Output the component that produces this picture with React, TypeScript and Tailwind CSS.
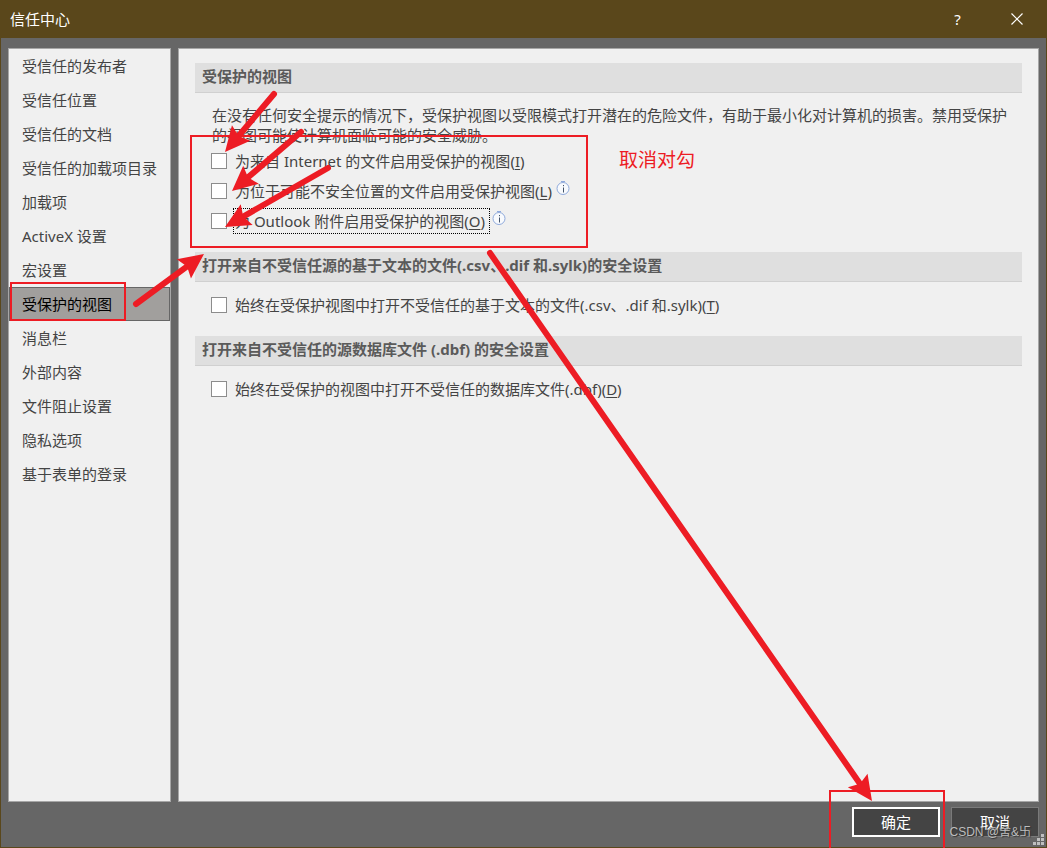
import type { ReactNode } from "react";

const categories = [
  "受信任的发布者",
  "受信任位置",
  "受信任的文档",
  "受信任的加载项目录",
  "加载项",
  "ActiveX 设置",
  "宏设置",
  "受保护的视图",
  "消息栏",
  "外部内容",
  "文件阻止设置",
  "隐私选项",
  "基于表单的登录",
];

const selected = "受保护的视图";

function InfoIcon() {
  return (
    <svg viewBox="0 0 14 14" className="mb-1.5 ml-0.5 size-[14px] shrink-0" aria-hidden="true">
      <circle cx="7" cy="7.5" r="6" fill="#f8fafd" stroke="#8faadc" strokeWidth="1" />
      <path d="M5 0.5h4" stroke="#8faadc" strokeWidth="1" />
      <path d="M7.5 4v1.2M7.5 6.5v5" stroke="#44546a" strokeWidth="1" />
    </svg>
  );
}

interface SectionProps {
  title: string;
  children: ReactNode;
}

function Section({ title, children }: SectionProps) {
  return (
    <section className="mb-4">
      <h2 className="h-[30px] border-b border-[#d0d0d0] bg-[#dfdfdf] pl-[7px] text-[15px] leading-[26px] font-bold text-[#5a5a5a]">
        {title}
      </h2>
      {children}
    </section>
  );
}

interface OptionProps {
  id: string;
  label: string;
  hotkey: string;
  info?: boolean;
  focused?: boolean;
}

function Option({ id, label, hotkey, info, focused }: OptionProps) {
  return (
    <div className="flex h-[30px] items-center pl-4">
      <input
        id={id}
        type="checkbox"
        className="size-4 shrink-0 appearance-none border border-[#8c8c8c] bg-white checked:bg-[#444]"
      />
      <label
        htmlFor={id}
        className={
          focused
            ? "ml-[6px] border border-dotted border-black pr-1 pl-px leading-6"
            : "ml-[6px] border border-transparent px-px leading-6"
        }
      >
        {label}(<u className="underline-offset-2">{hotkey}</u>)
      </label>
      {info && <InfoIcon />}
    </div>
  );
}

interface ArrowProps {
  from: [number, number];
  to: [number, number];
}

function Arrow({ from, to }: ArrowProps) {
  const length = Math.hypot(to[0] - from[0], to[1] - from[1]);
  const angle = (Math.atan2(to[1] - from[1], to[0] - from[0]) * 180) / Math.PI;
  return (
    <g transform={`translate(${from[0]} ${from[1]}) rotate(${angle})`}>
      <path d={`M0 0H${length - 18}`} stroke="#ed1c24" strokeWidth="6" strokeLinecap="round" />
      <path d={`M${length} 0l-25 -12l4 12l-4 12z`} fill="#ed1c24" />
    </g>
  );
}

function Annotations() {
  return (
    <div className="pointer-events-none absolute inset-0 overflow-hidden">
      <svg width="1047" height="848" fill="none" className="max-w-none" aria-hidden="true">
        <g stroke="#ed1c24" strokeWidth="2">
          <rect x="191" y="136" width="396" height="111" />
          <rect x="11" y="283" width="114" height="37" />
          <rect x="830" y="791" width="114" height="60" />
        </g>
        <Arrow from={[274, 94]} to={[225, 152]} />
        <Arrow from={[301, 132]} to={[232, 191]} />
        <Arrow from={[328, 168]} to={[225, 227]} />
        <Arrow from={[136, 304]} to={[204, 254]} />
        <Arrow from={[490, 253]} to={[872, 801]} />
      </svg>
      <p className="absolute top-[146px] left-[619px] text-[19px] leading-7 text-[#ed1c24]">取消对勾</p>
      <p className="absolute right-4 bottom-2 font-['Liberation_Sans','Noto_Sans_CJK_SC',sans-serif] text-[12px] leading-4 text-[#bdbdbd] [text-shadow:1px_1px_1px_#333]">
        CSDN @舍&amp;卐
      </p>
    </div>
  );
}

export default function App() {
  return (
    <div className="relative flex min-h-screen flex-col bg-[#5a471b] font-['Noto_Sans','Noto_Sans_CJK_SC',sans-serif] text-[15px] text-[#444]">
      <header className="flex h-[38px] items-center pl-[10px] text-white">
        <h1 className="flex-1">信任中心</h1>
        <button type="button" aria-label="帮助" className="h-full w-[57px]">
          ?
        </button>
        <button type="button" aria-label="关闭" className="flex h-full w-[61px] items-center justify-center">
          <svg viewBox="0 0 12 12" className="size-3" fill="none" stroke="white" strokeWidth="1.2">
            <path d="M0.5 0.5l11 11M11.5 0.5l-11 11" />
          </svg>
        </button>
      </header>

      <div className="mx-px mb-px flex flex-1 flex-col bg-[#666] px-[7px] pt-[10px]">
        <div className="flex flex-1 gap-[7px]">
          <nav className="w-[163px] shrink-0 border border-[#a6a6a6] bg-[#f0f0f0]">
            <ul>
              {categories.map((name) => (
                <li key={name}>
                  <button
                    type="button"
                    className={
                      name === selected
                        ? "h-[34px] w-full border border-[#666] bg-[#a19f9d] pl-3 text-left text-black"
                        : "h-[34px] w-full border border-transparent pl-3 text-left"
                    }
                  >
                    {name}
                  </button>
                </li>
              ))}
            </ul>
          </nav>

          <main className="min-w-0 flex-1 border border-[#a6a6a6] bg-[#f0f0f0] px-4 pt-[14px]">
            <Section title="受保护的视图">
              <p className="mt-3 mb-px pr-3 pl-[17px] leading-5">
                在没有任何安全提示的情况下，受保护视图以受限模式打开潜在的危险文件，有助于最小化对计算机的损害。禁用受保护的视图可能使计算机面临可能的安全威胁。
              </p>
              <Option id="internet" label="为来自 Internet 的文件启用受保护的视图" hotkey="I" />
              <Option id="unsafe" label="为位于可能不安全位置的文件启用受保护视图" hotkey="L" info />
              <Option id="outlook" label="为 Outlook 附件启用受保护的视图" hotkey="O" info focused />
            </Section>
            <Section title="打开来自不受信任源的基于文本的文件(.csv、.dif 和.sylk)的安全设置">
              <div className="pt-2">
                <Option id="text" label="始终在受保护视图中打开不受信任的基于文本的文件(.csv、.dif 和.sylk)" hotkey="T" />
              </div>
            </Section>
            <Section title="打开来自不受信任的源数据库文件 (.dbf) 的安全设置">
              <div className="pt-2">
                <Option id="database" label="始终在受保护的视图中打开不受信任的数据库文件(.dbf)" hotkey="D" />
              </div>
            </Section>
          </main>
        </div>

        <footer className="relative flex h-[45px] justify-end gap-[11px] pt-[5px] text-white">
          <button type="button" className="h-[30px] w-[88px] border-2 border-white bg-[#444]">
            确定
          </button>
          <button type="button" className="h-[30px] w-[88px] border border-[#7a7a7a] bg-[#444]">
            取消
          </button>
          <svg viewBox="0 0 11 11" className="absolute -right-[5px] bottom-[2px] size-[11px]" fill="#bfbfbf" aria-hidden="true">
            <path d="M8 0h3v3h-3zM4 4h3v3h-3zM8 4h3v3h-3zM0 8h3v3h-3zM4 8h3v3h-3zM8 8h3v3h-3z" />
          </svg>
        </footer>
      </div>

      <Annotations />
    </div>
  );
}
